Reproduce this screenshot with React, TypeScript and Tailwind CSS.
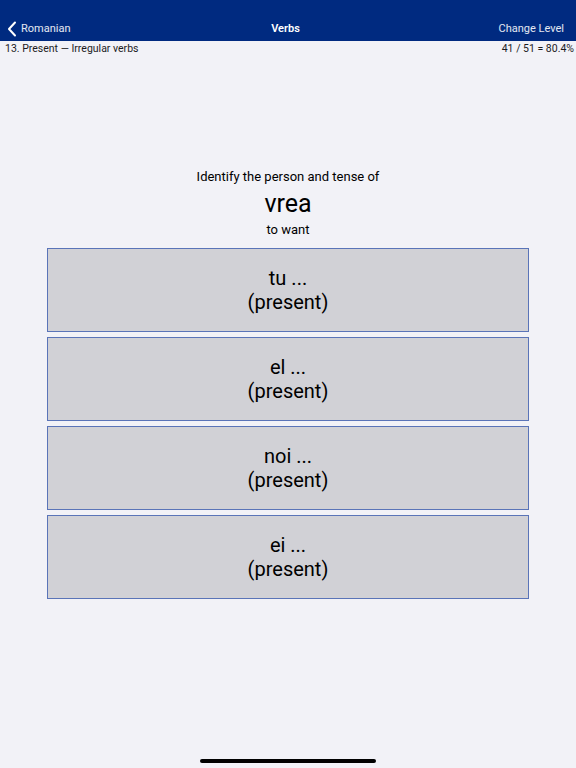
import React from 'react';

const options = ['tu', 'el', 'noi', 'ei'];

const ChevronLeft = () => (
  <svg width="10" height="16" viewBox="0 0 10 16" fill="none">
    <path d="M8 1.5L2 8l6 6.5" stroke="white" strokeWidth="2" strokeLinecap="round" strokeLinejoin="round" />
  </svg>
);

export default function App() {
  return (
    <div className="w-[576px] h-[768px] bg-[#f2f2f7] flex flex-col relative overflow-hidden text-black" style={{ fontFamily: 'Roboto, "Noto Sans", sans-serif' }}>
      {/* Nav bar */}
      <div className="h-[41px] bg-[#002a80] flex items-end pb-[4px] pl-[7px] pr-[12px] text-white text-[11px]">
        <div className="flex-1 flex items-center gap-[4px]">
          <ChevronLeft />
          <span className="text-white/90">Romanian</span>
        </div>
        <div className="font-semibold text-[11px]">Verbs</div>
        <div className="flex-1 text-right text-white/90">Change Level</div>
      </div>

      {/* Lesson row */}
      <div className="h-[14px] pt-[2px] flex items-center justify-between pl-[5px] pr-[2px] text-[10.5px] leading-none text-[#1c1c1e]">
        <span>13. Present — Irregular verbs</span>
        <span>41 / 51 = 80.4%</span>
      </div>

      {/* Question */}
      <div className="mt-[114px] flex flex-col items-center">
        <div className="text-[13px] leading-[16px]">Identify the person and tense of</div>
        <div className="text-[25px] leading-[30px] mt-[4px]">vrea</div>
        <div className="text-[13px] leading-[16px] mt-[3px]">to want</div>
      </div>

      {/* Answers */}
      <div className="mt-[10px] px-[47px] flex flex-col gap-[5px]">
        {options.map((p) => (
          <button
            key={p}
            className="h-[84px] w-full bg-[#d1d1d6] border border-[#5a74b8] flex flex-col items-center justify-center text-[20px] leading-[24px]"
          >
            <span>{p} ...</span>
            <span>(present)</span>
          </button>
        ))}
      </div>

      {/* Home indicator */}
      <div className="absolute bottom-[5px] left-[200px] w-[176px] h-[4px] rounded-full bg-black" />
    </div>
  );
}
